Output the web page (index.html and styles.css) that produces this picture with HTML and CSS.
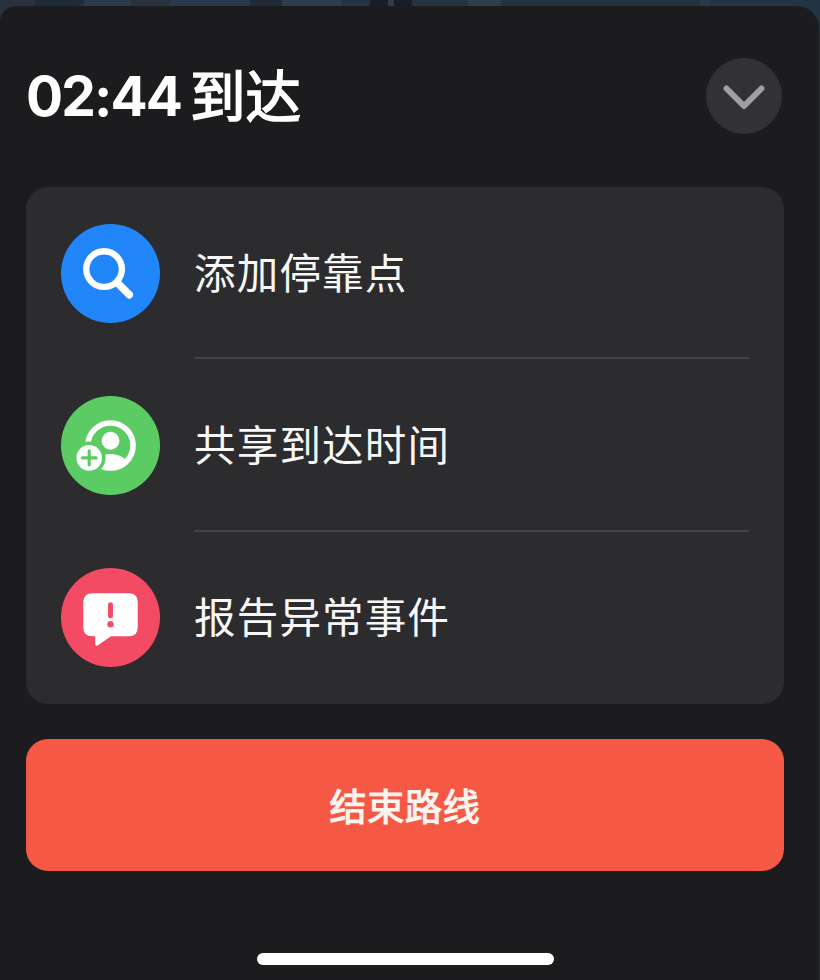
FILE: index.html
```html
<!DOCTYPE html>
<html lang="zh-CN">
<head>
<meta charset="utf-8">
<title>到达</title>
<link rel="stylesheet" href="styles.css">
</head>
<body>
<main class="screen">
  <section class="sheet">
    <header class="header">
      <h1 class="title"><span class="time">02:44</span><span class="arrive">到达</span></h1>
      <button class="collapse" aria-label="收起">
        <svg width="76" height="76" viewBox="0 0 76 76"><path d="M20.500 30.500 38 48 55.500 30.500" fill="none" stroke="#a09fa6" stroke-width="6" stroke-linecap="round" stroke-linejoin="round"/></svg>
      </button>
    </header>
    <ul class="card">
      <li class="row">
        <svg class="icon search" viewBox="0 0 100 100"><circle cx="43.500" cy="45.500" r="18" fill="none" stroke="#fff" stroke-width="6.400"/><path d="M57 59.500 69 71.500" stroke="#fff" stroke-width="7.600" stroke-linecap="round"/></svg>
        <span class="label">添加停靠点</span>
      </li>
      <li class="row">
        <svg class="icon share" viewBox="0 0 100 100">
          <defs><clipPath id="person"><circle cx="50" cy="50" r="25"/></clipPath></defs>
          <circle cx="50" cy="50" r="22.800" fill="none" stroke="#fff" stroke-width="5.600"/>
          <circle cx="50" cy="45.200" r="9" fill="#fff"/>
          <ellipse cx="50" cy="71" rx="18" ry="12.500" fill="#fff" clip-path="url(#person)"/>
          <circle cx="28.500" cy="62.500" r="16.500" fill="#5bcc64"/>
          <circle cx="28.500" cy="62.500" r="12.900" fill="#fff"/>
          <path d="M21.500 62.500h14M28.500 55.500v14" stroke="#5bcc64" stroke-width="3.200" stroke-linecap="round"/>
        </svg>
        <span class="label">共享到达时间</span>
      </li>
      <li class="row">
        <svg class="icon report" viewBox="0 0 100 100">
          <path d="M32 25.500H68.500Q77.500 25.500 77.500 34.500V60Q77.500 69 68.500 69H50.500L37 78.300Q34.500 79.500 34.500 76.500V69H32Q22.500 69 22.500 60V34.500Q22.500 25.500 32 25.500Z" fill="#fff"/>
          <path d="M50 37V48.500" stroke="#f24b63" stroke-width="5" stroke-linecap="round"/>
          <circle cx="50" cy="56.700" r="3.200" fill="#f24b63"/>
        </svg>
        <span class="label">报告异常事件</span>
      </li>
    </ul>
    <button class="end"><span>结束路线</span></button>
    <div class="home"></div>
  </section>
</main>
</body>
</html>
```
FILE: styles.css
```css
* { box-sizing: border-box; }
body { margin: 0; background: #1c1c1e; font-family: Inter, "Noto Sans CJK SC", sans-serif; }
button { border: 0; padding: 0; font: inherit; }
.screen {
  width: 820px;
  height: 980px;
  padding-top: 6px;
  overflow: hidden;
  background: linear-gradient(90deg, #28313e 0 35px, #202b38 35px 76px, #222c38 76px 84px, #2b3b4c 84px 131px, #28323b 131px 170px, #29384a 170px 250px, #202a35 250px 282px, #2e3d4e 282px 342px, #253344 342px 370px, #181e27 370px 388px, #343b46 388px 394px, #181e27 394px 412px, #253341 412px 468px, #303d4a 468px 501px, #243240 501px 700px, #2a3947 700px 710px, #233444 710px);
}
.sheet {
  display: flex;
  flex-direction: column;
  width: 819px;
  height: 974px;
  padding: 52px 35px 0 26px;
  border-radius: 16px 22px 0 0;
  background: #1c1c1e;
}
.header { display: flex; justify-content: space-between; height: 129px; padding-right: 2px; }
.title { display: flex; align-items: flex-start; height: 76px; margin: 0; color: #fff; line-height: 76px; }
.time { width: 164px; font-size: 55px; font-weight: 700; letter-spacing: -1.900px; }
.arrive {
  font-family: "Noto Sans CJK SC", sans-serif;
  font-size: 55.500px;
  font-weight: 400;
  line-height: 71px;
  -webkit-text-stroke: 1.700px #fff;
}
.collapse { width: 76px; height: 76px; border-radius: 50%; background: #323136; }
.collapse svg { display: block; }
.card {
  display: flex;
  flex-direction: column;
  width: 758px;
  height: 517px;
  margin: 0 0 35px;
  padding: 0 35px 0 35px;
  list-style: none;
  border-radius: 22px;
  background: #2c2c2e;
}
.row { display: grid; grid-template-columns: 99px 1fr; column-gap: 34px; height: 172.500px; align-items: center; }
.icon { width: 99px; height: 99px; border-radius: 50%; }
.search { background: #2186f9; }
.share { background: #5bcc64; }
.report { background: #f24b63; }
.label {
  display: flex;
  align-items: center;
  height: 100%;
  padding-bottom: 3px;
  color: #f7f7f7;
  font-family: "Noto Sans CJK SC", sans-serif;
  font-size: 41.500px;
  letter-spacing: 1.200px;
  border-bottom: 2px solid #434346;
}
.row:last-child .label { border-bottom-color: transparent; }
.end {
  width: 758px;
  height: 132px;
  border-radius: 22px;
  background: #f55845;
  color: #fff4ee;
  font-family: "Noto Sans CJK SC", sans-serif;
  font-size: 37px;
  font-weight: 400;
  letter-spacing: 0.700px;
  -webkit-text-stroke: 1.200px #fff4ee;
}
.end span { display: block; padding-bottom: 1px; }
.home { width: 297px; height: 12px; margin: 82px 0 0 231px; border-radius: 6px; background: #fff; }
```
